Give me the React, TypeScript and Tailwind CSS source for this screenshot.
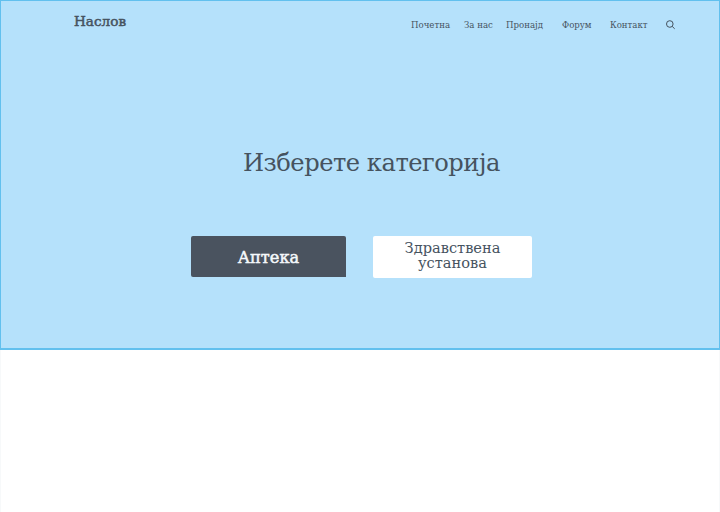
import React from 'react';

const links = [
  { label: 'Почетна', box: 'w-[53px]' },
  { label: 'За нас', box: 'w-[42px]' },
  { label: 'Пронајд', box: 'w-[56px]' },
  { label: 'Форум', box: 'w-[48px]' },
  { label: 'Контакт', box: 'w-[56px]' },
];

export default function App() {
  return (
    <div className="h-[512px] w-[720px] overflow-hidden bg-white font-['Roboto_Slab','DejaVu_Serif',serif] text-[#46535f]">
      <section className="flex h-[350px] flex-col border border-b-2 border-[#62c0ee] bg-[#b5e1fb]">
        <header className="flex h-[48px] items-start pl-[73px]">
          <div className="w-[337px] pt-[10px] text-[13.6px] leading-5 whitespace-nowrap [-webkit-text-stroke:0.5px_#46535f]">Наслов</div>
          <nav className="flex pt-[17px] text-[8.6px] leading-[14px]">
            {links.map((link) => (
              <a key={link.label} className={`${link.box} whitespace-nowrap`}>{link.label}</a>
            ))}
            <svg className="mt-[1px] -ml-px h-[11px] w-[11px]" viewBox="0 0 11 11" fill="none" stroke="currentColor" strokeWidth="1">
              <circle cx="4.8" cy="5" r="3.3" />
              <path d="M7.2 7.4 9.7 9.8" />
            </svg>
          </nav>
        </header>
        <h1 className="mt-[94px] pl-[242px] text-[24.2px] leading-[40px] tracking-[-0.5px] whitespace-nowrap">Изберете категорија</h1>
        <div className="mt-[53px] flex items-start gap-[27px] pl-[190px]">
          <button className="h-[41px] w-[155px] rounded-[2px] rounded-br-none bg-[#4a535f] pt-[4px] text-[16.2px] text-[#f5f8fb] [-webkit-text-stroke:0.5px_#f5f8fb]">Аптека</button>
          <button className="flex h-[42px] w-[159px] flex-col items-center rounded-[2px] bg-white pt-[4px] text-[14.6px] leading-[15px]">
            <span>Здравствена</span>
            <span>установа</span>
          </button>
        </div>
      </section>
      <div className="h-[162px] border-x border-[#f7f9fa]" />
    </div>
  );
}
